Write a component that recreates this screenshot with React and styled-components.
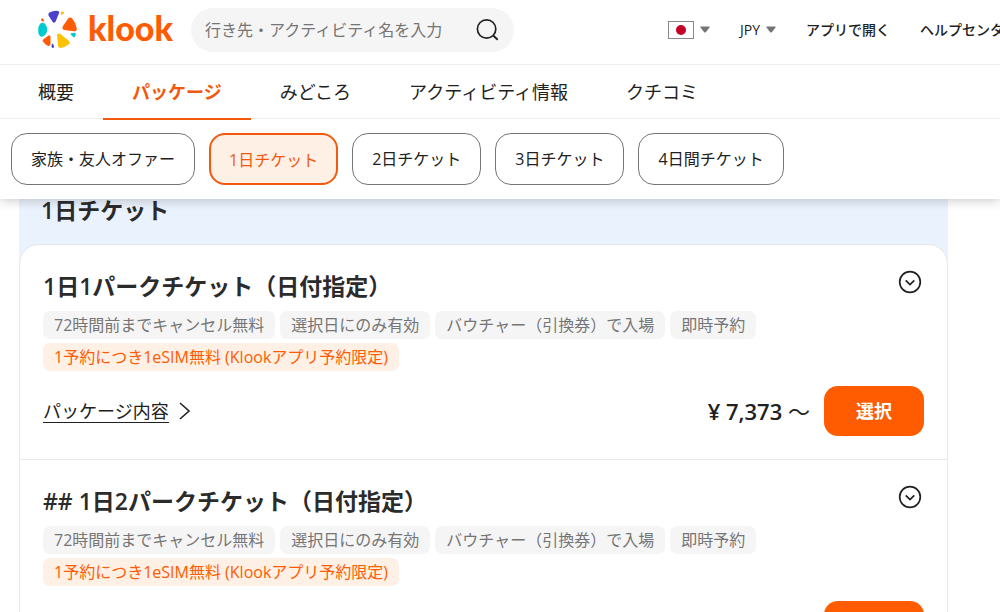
import React from "react";
import styled, { createGlobalStyle, css } from "styled-components";

const GlobalStyle = createGlobalStyle`
  * { box-sizing: border-box; }
  body {
    margin: 0;
    background: #fff;
    color: #212121;
    font-family: "Open Sans", "Noto Sans CJK JP", sans-serif;
    overflow-x: hidden;
  }
  button, input { font-family: inherit; }
  button { cursor: pointer; }
`;

const StickyTop = styled.div`
  position: sticky;
  top: 0;
  z-index: 2;
  background: #fff;
  box-shadow: 0 2px 10px rgba(0, 0, 0, 0.2);
`;

const Header = styled.header`
  display: flex;
  align-items: center;
  height: 65px;
  padding: 0 0 5px 37px;
  border-bottom: 1px solid #eee;
  overflow: hidden;
  white-space: nowrap;
`;

const Logo = styled.a`
  display: flex;
  align-items: flex-start;
  gap: 10px;
  width: 154px;
  flex: none;
  color: #ff5b00;
  font-family: Lato, sans-serif;
  font-size: 34px;
  font-weight: 900;
  line-height: 36px;
  text-decoration: none;
`;

const SearchBox = styled.form`
  display: flex;
  align-items: center;
  flex: none;
  width: 323px;
  height: 44px;
  padding: 0 14px;
  border-radius: 22px;
  background: #f5f5f5;
`;

const SearchInput = styled.input`
  flex: 1;
  min-width: 0;
  padding: 0;
  border: 0;
  outline: 0;
  background: none;
  font-size: 16px;
  line-height: 24px;
  &::placeholder { color: #757575; opacity: 1; }
`;

const IconButton = styled.button`
  display: flex;
  flex: none;
  padding: 0;
  border: 0;
  background: none;
  color: #212121;
`;

const HeaderNav = styled.nav`
  display: flex;
  align-items: center;
  gap: 30px;
  flex: none;
  margin-left: 154px;
`;

const navItem = css`
  display: flex;
  align-items: center;
  gap: 6px;
  padding: 0;
  border: 0;
  background: none;
  color: #212121;
  font-size: 14px;
  font-weight: 500;
  line-height: 20px;
  text-decoration: none;
`;
const NavButton = styled.button`${navItem}`;
const NavLink = styled.a`${navItem}`;

const Flag = styled.span`
  display: flex;
  align-items: center;
  justify-content: center;
  width: 26px;
  height: 18px;
  border: 1px solid #888;
  &::after {
    content: "";
    width: 10px;
    height: 10px;
    border-radius: 50%;
    background: #c40026;
  }
`;

const Tabs = styled.nav`
  display: flex;
  height: 54px;
  padding-left: 9px;
  border-bottom: 1px solid #eee;
  white-space: nowrap;
`;

const Tab = styled.a`
  height: 55px;
  padding: 0 29px;
  border-bottom: 2px solid ${(p) => (p.$active ? "#f2590d" : "transparent")};
  color: ${(p) => (p.$active ? "#f2590d" : "#212121")};
  font-size: 18px;
  font-weight: ${(p) => (p.$active ? 700 : 400)};
  line-height: 54px;
  text-decoration: none;
`;

const Pills = styled.div`
  display: flex;
  gap: 14px;
  padding: 14px 11px;
`;

const Pill = styled.button`
  flex: none;
  height: 52px;
  padding: ${(p) => (p.$active ? "2px 18px 0" : "0 19px")};
  border: ${(p) => (p.$active ? "2px solid #f2590d" : "1px solid #757575")};
  border-radius: 16px;
  background: ${(p) => (p.$active ? "#fff0e5" : "#fff")};
  color: ${(p) => (p.$active ? "#f2590d" : "#212121")};
  font-size: 16px;
  font-weight: 400;
  line-height: 24px;
  white-space: nowrap;
`;

const Section = styled.section`
  margin: 0 52px 0 19px;
  background: #eaf2fd;
`;

const SectionTitle = styled.h2`
  margin: 0;
  padding: 0 22px 23px;
  color: #2b2b2b;
  font-size: 23px;
  font-weight: 600;
  line-height: 22px;
`;

const Card = styled.div`
  border: 1px solid #e6e8eb;
  border-radius: 20px 20px 0 0;
  background: #fff;
`;

const Package = styled.article`
  padding: 24px 23px 23px;
  & + & { border-top: 1px solid #e8e8e8; }
`;

const PackageHead = styled.div`
  display: flex;
  justify-content: space-between;
  align-items: flex-start;
  padding-right: 2px;
`;

const PackageTitle = styled.h3`
  margin: 0 0 8px;
  color: #2b2b2b;
  font-size: 23px;
  font-weight: 600;
  line-height: 34px;
`;

const Tags = styled.div`
  display: flex;
  flex-wrap: wrap;
  gap: 4px 5px;
`;

const Tag = styled.span`
  padding: 0 11px;
  border-radius: 7px;
  background: ${(p) => (p.$promo ? "#fff0e5" : "#f5f5f5")};
  color: ${(p) => (p.$promo ? "#ff5b00" : "#757575")};
  font-size: 16px;
  font-weight: 400;
  line-height: 28px;
`;

const PackageFoot = styled.div`
  display: flex;
  align-items: center;
  margin-top: 15px;
`;

const DetailLink = styled.a`
  display: flex;
  align-items: center;
  gap: 8px;
  margin-right: auto;
  color: #212121;
  font-size: 18px;
  line-height: 28px;
  text-decoration: none;
  span { border-bottom: 1px solid #212121; line-height: 22px; }
`;

const Price = styled.span`
  margin-right: 14px;
  font-size: 22px;
  font-weight: 600;
  line-height: 28px;
  span { font-weight: 400; }
`;

const SelectButton = styled.button`
  width: 100px;
  height: 50px;
  border: 0;
  border-radius: 14px;
  background: #ff5b00;
  color: #fff;
  font-size: 18px;
  font-weight: 700;
  line-height: 28px;
`;

const LogoMark = () => (
  <svg width="41" height="40" viewBox="0 0 41 40" aria-hidden="true">
    <path d="M12.5 2.5Q17 .2 21 1Q23 1.5 21.7 4L18.5 11.8Q17 13.5 15.5 11.8L11.5 5.5Q10.8 3.6 12.5 2.5Z" fill="#4d40ca" />
    <path d="M25 1.5Q28 1.4 27 3.2L24.5 5.2Q23.5 5 24 2.2Z" fill="#ffc200" />
    <path d="M31.5 8Q33.4 6.6 35.2 8.4Q39 13 39.8 18.5Q40 21.4 37 21.3L27 20Q24.5 18.8 26 16Z" fill="#ff5b00" />
    <path d="M34 23.2L38 22.8Q39.5 23.5 38 26.8Q37 28 35.8 26.5L33.6 24.5Z" fill="#00cbd1" />
    <path d="M20 25Q21.5 22.8 23.5 24L32 31Q33.8 33 31.5 34.5Q27.5 37.5 23.5 38Q21.3 38 21 35.5Z" fill="#ffc200" />
    <path d="M15.6 33.5Q17.3 35 17 37Q16.5 38.5 14.8 37.5Q13.8 37 15 34Z" fill="#4d40ca" />
    <path d="M6.5 29.2L11.5 25.4Q13.5 25 13.5 27V34Q12.8 36.8 10.7 35.7Q7.5 34 5.8 31.2Q5.2 30 6.5 29.2Z" fill="#ff5b00" />
    <path d="M4 13Q6 12 8 13.8Q11 17.5 9.8 22Q8.5 26.2 4.5 26.8Q2.2 26.5 1.3 22.5Q.5 16 4 13Z" fill="#00cbd1" />
    <path d="M5.2 8.3Q6.6 8.5 7 11Q6.7 12.2 5.2 11.2Q3.5 10.5 4 9.3Z" fill="#ff5b00" />
  </svg>
);

const SearchIcon = () => (
  <svg width="24" height="24" viewBox="0 0 24 24" fill="none" stroke="currentColor" strokeWidth="1.7" aria-hidden="true">
    <circle cx="10.6" cy="11" r="9.2" />
    <path d="m17.2 17.5 4.5 4.2" strokeWidth="2" />
  </svg>
);

const Caret = () => (
  <svg width="10" height="7" viewBox="0 0 10 7" aria-hidden="true">
    <path d="M1 .5h8q1 .2.5 1L5.8 6.2q-.8.8-1.6 0L.5 1.5Q0 .7 1 .5Z" fill="#757575" />
  </svg>
);

const CircleChevron = () => (
  <svg width="24" height="26" viewBox="0 0 24 26" fill="none" stroke="currentColor" strokeWidth="1.7" aria-hidden="true">
    <circle cx="12" cy="13" r="10.3" />
    <path d="m7.7 11.4 4.3 4.2 4.3-4.2" />
  </svg>
);

const ChevronRight = () => (
  <svg width="14" height="20" viewBox="0 0 14 20" fill="none" stroke="currentColor" strokeWidth="1.6" aria-hidden="true">
    <path d="m3 2 9 8-9 8" />
  </svg>
);

const tabs = ["概要", "パッケージ", "みどころ", "アクティビティ情報", "クチコミ"];
const pills = ["家族・友人オファー", "1日チケット", "2日チケット", "3日チケット", "4日間チケット"];
const packages = ["1日1パークチケット（日付指定）", "## 1日2パークチケット（日付指定）"];
const tags = ["72時間前までキャンセル無料", "選択日にのみ有効", "バウチャー（引換券）で入場", "即時予約"];

export default function App() {
  return (
    <>
      <GlobalStyle />
      <StickyTop>
        <Header>
          <Logo href="#"><LogoMark />klook</Logo>
          <SearchBox role="search">
            <SearchInput aria-label="検索" placeholder="行き先・アクティビティ名を入力" />
            <IconButton type="button" aria-label="検索"><SearchIcon /></IconButton>
          </SearchBox>
          <HeaderNav>
            <NavButton aria-label="日本"><Flag /><Caret /></NavButton>
            <NavButton>JPY <Caret /></NavButton>
            <NavLink href="#">アプリで開く</NavLink>
            <NavLink href="#">ヘルプセンター</NavLink>
          </HeaderNav>
        </Header>
        <Tabs>
          {tabs.map((t) => <Tab key={t} href="#" $active={t === "パッケージ"}>{t}</Tab>)}
        </Tabs>
        <Pills>
          {pills.map((p) => <Pill key={p} $active={p === "1日チケット"}>{p}</Pill>)}
        </Pills>
      </StickyTop>
      <Section>
        <SectionTitle>1日チケット</SectionTitle>
        <Card>
          {packages.map((name) => (
            <Package key={name}>
              <PackageHead>
                <PackageTitle>{name}</PackageTitle>
                <IconButton aria-label="詳細"><CircleChevron /></IconButton>
              </PackageHead>
              <Tags>
                {tags.map((t) => <Tag key={t}>{t}</Tag>)}
                <Tag $promo>1予約につき1eSIM無料 (Klookアプリ予約限定)</Tag>
              </Tags>
              <PackageFoot>
                <DetailLink href="#"><span>パッケージ内容</span><ChevronRight /></DetailLink>
                <Price>¥ 7,373 <span>～</span></Price>
                <SelectButton>選択</SelectButton>
              </PackageFoot>
            </Package>
          ))}
        </Card>
      </Section>
    </>
  );
}
